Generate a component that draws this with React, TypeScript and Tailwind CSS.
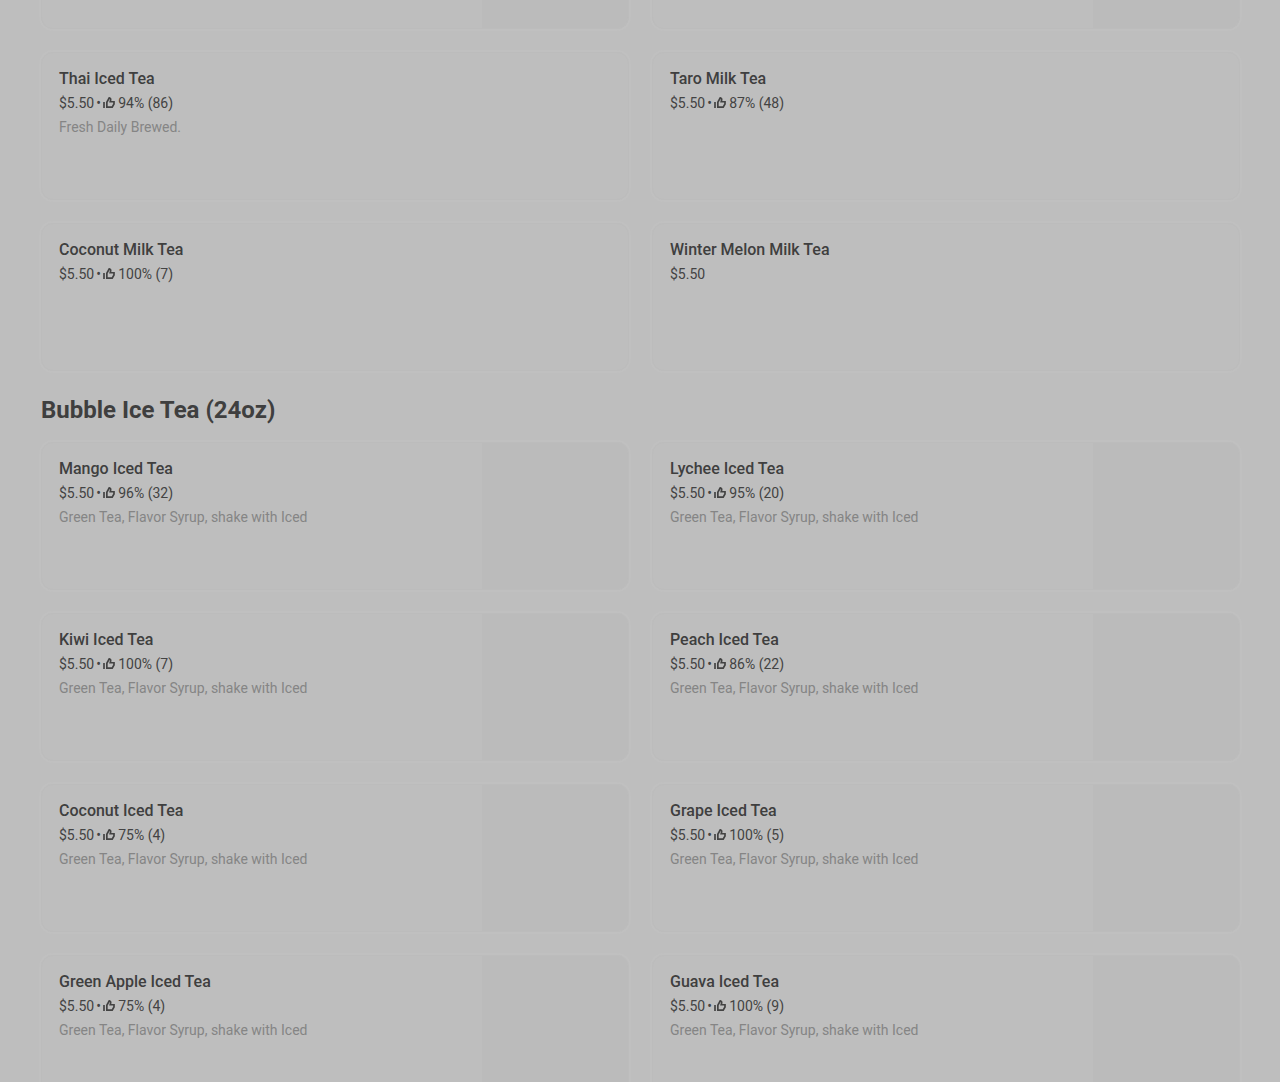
interface MenuItem {
  name: string
  price: string
  rating?: string
  description?: string
  hasImage?: boolean
}

const SYRUP = 'Green Tea, Flavor Syrup, shake with Iced'

const milkTeas: MenuItem[] = [
  { name: 'Thai Iced Tea', price: '$5.50', rating: '94% (86)', description: 'Fresh Daily Brewed.' },
  { name: 'Taro Milk Tea', price: '$5.50', rating: '87% (48)' },
  { name: 'Coconut Milk Tea', price: '$5.50', rating: '100% (7)' },
  { name: 'Winter Melon Milk Tea', price: '$5.50' },
]

const icedTeas: MenuItem[] = [
  { name: 'Mango Iced Tea', price: '$5.50', rating: '96% (32)', description: SYRUP, hasImage: true },
  { name: 'Lychee Iced Tea', price: '$5.50', rating: '95% (20)', description: SYRUP, hasImage: true },
  { name: 'Kiwi Iced Tea', price: '$5.50', rating: '100% (7)', description: SYRUP, hasImage: true },
  { name: 'Peach Iced Tea', price: '$5.50', rating: '86% (22)', description: SYRUP, hasImage: true },
  { name: 'Coconut Iced Tea', price: '$5.50', rating: '75% (4)', description: SYRUP, hasImage: true },
  { name: 'Grape Iced Tea', price: '$5.50', rating: '100% (5)', description: SYRUP, hasImage: true },
  { name: 'Green Apple Iced Tea', price: '$5.50', rating: '75% (4)', description: SYRUP, hasImage: true },
  { name: 'Guava Iced Tea', price: '$5.50', rating: '100% (9)', description: SYRUP, hasImage: true },
]

function ThumbUp() {
  return (
    <svg viewBox="0 0 24 24" className="w-3 h-3 shrink-0" fill="none" stroke="currentColor" strokeWidth="3.4" aria-hidden="true">
      <path d="M2 10v12" />
      <path d="M7.700 20.300V10.500L12.500 1.700c2.400.4 3.200 2.200 2.700 4.500l-.8 3.300h7.600v4.500l-3.600 6.300z" />
    </svg>
  )
}

function ItemCard({ item }: { item: MenuItem }) {
  return (
    <li>
      <a
        href="#"
        className="flex h-[148px] overflow-hidden rounded-xl border border-[#bcbcbc] shadow-[0_0_0_2px_#c0c0c0]"
      >
        <div className="flex-1 min-w-0 pl-[17px] pt-3.5">
          <h3 className="text-base leading-6 font-medium text-[#3f3f3f]">{item.name}</h3>
          <p className="flex items-center text-sm leading-6 text-[#434343]">
            {item.price}
            {item.rating && (
              <>
                <span className="w-[9px] text-center">•</span>
                <ThumbUp />
                <span className="ml-[3px]">{item.rating}</span>
              </>
            )}
          </p>
          {item.description && <p className="text-sm leading-6 text-[#858585] truncate">{item.description}</p>}
        </div>
        {item.hasImage && <div className="w-[146px] shrink-0 bg-[#bbbbbb]" />}
      </a>
    </li>
  )
}

function ItemGrid({ items }: { items: MenuItem[] }) {
  return (
    <ul className="grid grid-cols-2 gap-[23px]">
      {items.map((item) => (
        <ItemCard key={item.name} item={item} />
      ))}
    </ul>
  )
}

// Bottom edge of the row that is scrolled past the top
function ScrolledRow() {
  return (
    <div className="grid grid-cols-2 gap-[23px] mb-[23px]">
      {['left', 'right'].map((side) => (
        <div
          key={side}
          className="flex justify-end h-[29px] overflow-hidden rounded-b-xl border border-t-0 border-[#bcbcbc] shadow-[0_0_0_2px_#c0c0c0]"
        >
          <div className="w-[146px] bg-[#bbbbbb]" />
        </div>
      ))}
    </div>
  )
}

export default function App() {
  return (
    <main className="h-screen overflow-hidden bg-[#bebebe] pl-[41px] pr-10 font-['Roboto','Liberation_Sans',sans-serif]">
      <ScrolledRow />
      <section>
        <ItemGrid items={milkTeas} />
      </section>
      <section>
        <h2 className="pt-[23px] pb-4 text-2xl leading-8 font-bold text-[#3f3f3f]">Bubble Ice Tea (24oz)</h2>
        <ItemGrid items={icedTeas} />
      </section>
    </main>
  )
}
